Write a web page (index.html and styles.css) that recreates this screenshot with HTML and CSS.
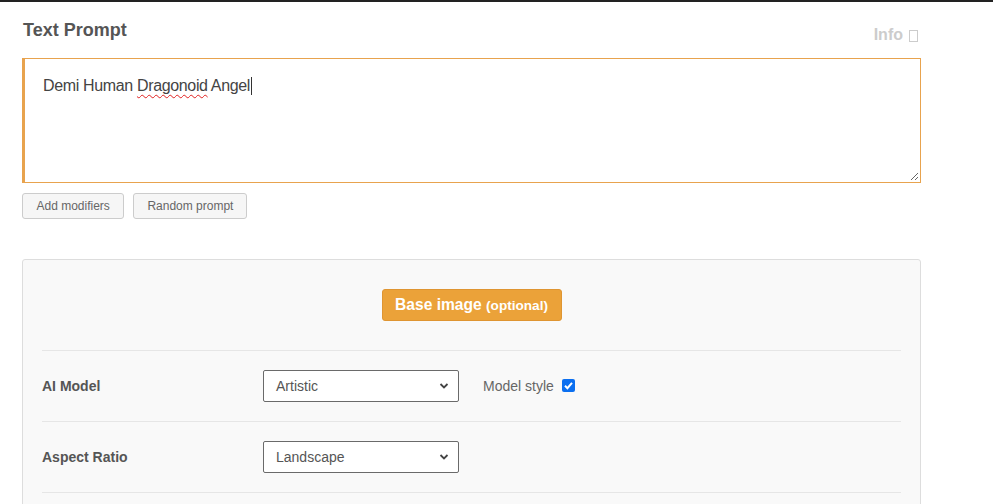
FILE: index.html
```html
<!DOCTYPE html>
<html lang="en">
<head>
<meta charset="utf-8">
<title>Text Prompt</title>
<link rel="stylesheet" href="styles.css">
</head>
<body>
<div class="page">
  <div class="head">
    <h2 class="title">Text Prompt</h2>
    <span class="info">Info <span class="tofu"></span></span>
  </div>
  <div class="prompt">Demi Human <span class="spell">Dragonoid</span> Angel<span class="caret"></span>
    <svg class="grip" width="10" height="10" viewBox="0 0 10 10"><path d="M9 2 L2 9 M9 6 L6 9" stroke="#666" stroke-width="1" fill="none"/></svg>
  </div>
  <div class="actions">
    <button class="btn">Add modifiers</button>
    <button class="btn btn-random">Random prompt</button>
  </div>
  <div class="panel">
    <div class="base-row">
      <button class="base-btn">Base image <small>(optional)</small></button>
    </div>
    <div class="row">
      <span class="label">AI Model</span>
      <div class="select">
        <span>Artistic</span>
        <svg class="chev" width="10" height="6" viewBox="0 0 10 6"><path d="M1.5 1 L5 4.5 L8.5 1" stroke="#444" stroke-width="1.8" fill="none"/></svg>
      </div>
      <span class="opt">Model style</span>
      <span class="check"><svg width="13" height="13" viewBox="0 0 13 13"><rect width="13" height="13" rx="2" fill="#0b6ff0"/><path d="M3 6.8 L5.4 9.2 L10 3.8" stroke="#fff" stroke-width="2" fill="none"/></svg></span>
    </div>
    <div class="row">
      <span class="label">Aspect Ratio</span>
      <div class="select">
        <span>Landscape</span>
        <svg class="chev" width="10" height="6" viewBox="0 0 10 6"><path d="M1.5 1 L5 4.5 L8.5 1" stroke="#444" stroke-width="1.8" fill="none"/></svg>
      </div>
    </div>
    <div class="row"></div>
  </div>
</div>
</body>
</html>
```

FILE: styles.css
```css
html, body {
  margin: 0;
  background: #fff;
}
body {
  border-top: 2px solid #222;
  font-family: "Liberation Sans", Arial, sans-serif;
  overflow: hidden;
  height: 502px;
}
.page {
  width: 899px;
  padding: 16px 0 0 22px;
}
.head {
  display: flex;
  justify-content: space-between;
  align-items: flex-start;
  height: 23px;
}
.title {
  margin: 0 0 0 1px;
  font-size: 18px;
  line-height: 24px;
  font-weight: bold;
  color: #555;
}
.info {
  margin: 5px 3px 0 0;
  font-size: 16px;
  line-height: 24px;
  font-weight: bold;
  color: #ccc;
  display: flex;
  align-items: center;
  gap: 6px;
}
.tofu {
  display: inline-block;
  width: 7px;
  height: 10px;
  border: 1px solid #ccc;
  margin-top: 1px;
}
.prompt {
  position: relative;
  margin-top: 17px;
  height: 125px;
  box-sizing: border-box;
  border: 1px solid #e8a34e;
  border-left: 3px solid #e8a34e;
  padding: 17px 18px;
  font-size: 16px;
  line-height: 20px;
  color: #444;
  letter-spacing: -0.35px;
}
.spell {
  text-decoration: underline wavy #e02020;
  text-decoration-thickness: 1px;
  text-underline-offset: 3px;
}
.caret {
  display: inline-block;
  width: 1px;
  height: 18px;
  background: #333;
  vertical-align: -4px;
  margin-left: 1px;
}
.grip {
  position: absolute;
  right: 1px;
  bottom: 1px;
}
.actions {
  display: flex;
  gap: 9px;
  margin-top: 10px;
}
.btn {
  height: 26px;
  padding: 0 13.5px;
  border: 1px solid #ccc;
  border-radius: 3px;
  background: #f6f6f6;
  font-family: "Liberation Sans", Arial, sans-serif;
  font-size: 12px;
  color: #666;
}
.btn-random {
  padding: 0 13px;
}
.panel {
  margin-top: 40px;
  border: 1px solid #ddd;
  border-radius: 3px;
  background: #f9f9f9;
  padding: 29px 19px 0;
  height: 300px;
}
.base-row {
  display: flex;
  justify-content: center;
  padding-bottom: 29px;
}
.base-btn {
  height: 32px;
  width: 180px;
  border: 1px solid #df9532;
  border-radius: 3px;
  background: #eba239;
  color: #fff;
  font-family: "Liberation Sans", Arial, sans-serif;
  font-size: 15.6px;
  font-weight: bold;
  padding: 0;
}
.base-btn small {
  font-size: 13.6px;
}
.row {
  display: flex;
  align-items: center;
  border-top: 1px solid #e6e6e6;
  padding: 19px 0;
  height: 32px;
}
.label {
  width: 221px;
  font-size: 14px;
  font-weight: bold;
  color: #555;
}
.select {
  width: 196px;
  height: 32px;
  box-sizing: border-box;
  border: 1px solid #6a6a6a;
  border-radius: 2px;
  background: #fff;
  display: flex;
  align-items: center;
  justify-content: space-between;
  padding: 0 9px 0 12px;
  font-size: 14px;
  color: #555;
}
.opt {
  margin-left: 24px;
  font-size: 14px;
  color: #666;
}
.check {
  display: flex;
  margin-left: 8px;
  margin-top: -2px;
}
```
